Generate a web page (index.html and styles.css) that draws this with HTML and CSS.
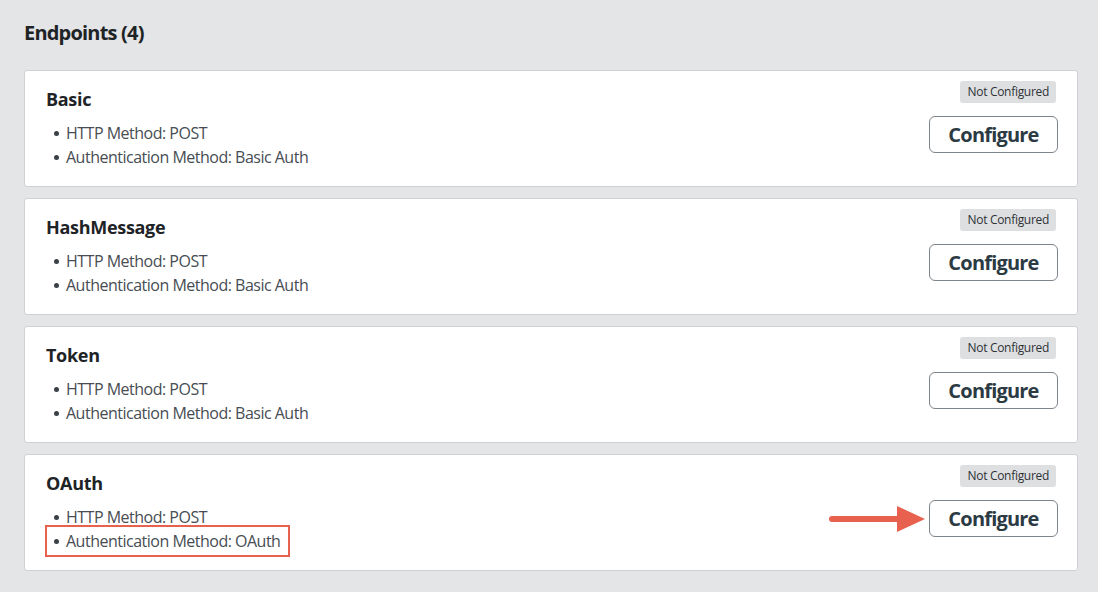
FILE: index.html
```html
<!DOCTYPE html>
<html lang="en">

<head>
    <meta charset="UTF-8">
    <meta name="viewport" content="width=device-width, initial-scale=1.0">
    <title>Endpoints</title>
    <link rel="stylesheet" href="styles.css">
</head>

<body>
    <div class="page">
        <h2 class="page-title">Endpoints (4)</h2>

        <div class="endpoint-list">
            <div class="card">
                <div class="card-info">
                    <h3 class="card-title">Basic</h3>
                    <ul class="props">
                        <li>HTTP Method: POST</li>
                        <li>Authentication Method: Basic Auth</li>
                    </ul>
                </div>
                <div class="card-side">
                    <span class="badge">Not Configured</span>
                    <div class="action-row">
                        <button class="btn">Configure</button>
                    </div>
                </div>
            </div>

            <div class="card">
                <div class="card-info">
                    <h3 class="card-title">HashMessage</h3>
                    <ul class="props">
                        <li>HTTP Method: POST</li>
                        <li>Authentication Method: Basic Auth</li>
                    </ul>
                </div>
                <div class="card-side">
                    <span class="badge">Not Configured</span>
                    <div class="action-row">
                        <button class="btn">Configure</button>
                    </div>
                </div>
            </div>

            <div class="card">
                <div class="card-info">
                    <h3 class="card-title">Token</h3>
                    <ul class="props">
                        <li>HTTP Method: POST</li>
                        <li>Authentication Method: Basic Auth</li>
                    </ul>
                </div>
                <div class="card-side">
                    <span class="badge">Not Configured</span>
                    <div class="action-row">
                        <button class="btn">Configure</button>
                    </div>
                </div>
            </div>

            <div class="card">
                <div class="card-info">
                    <h3 class="card-title">OAuth</h3>
                    <ul class="props">
                        <li>HTTP Method: POST</li>
                        <li class="highlight">Authentication Method: OAuth</li>
                    </ul>
                </div>
                <div class="card-side">
                    <span class="badge">Not Configured</span>
                    <div class="action-row">
                        <!-- annotation arrow -->
                        <svg class="arrow" width="96" height="28" viewBox="0 0 96 28">
                            <line x1="3" y1="14" x2="72" y2="14" stroke="#e8614f" stroke-width="6" stroke-linecap="round" />
                            <polygon points="68,1 96,14 68,27" fill="#e8614f" />
                        </svg>
                        <button class="btn">Configure</button>
                    </div>
                </div>
            </div>
        </div>
    </div>
</body>

</html>
```

FILE: styles.css
```css
body {
    margin: 0;
    font-family: "Open Sans", "Liberation Sans", sans-serif;
    background-color: #e4e5e7;
    color: #1e2326;
}

.page {
    padding: 20px 20px 20px 24px;
}

.page-title {
    margin: 0 0 24px;
    font-size: 20px;
    font-weight: 700;
    letter-spacing: -0.8px;
    line-height: 26px;
}

.endpoint-list {
    display: flex;
    flex-direction: column;
    gap: 11px;
}

.card {
    display: flex;
    justify-content: space-between;
    background: #fff;
    border: 1px solid #cfd1d4;
    border-radius: 3px;
    height: 117px;
    box-sizing: border-box;
    padding: 0 19px 0 21px;
}

.card-title {
    margin: 15px 0 0;
    font-size: 18px;
    font-weight: 700;
    letter-spacing: -0.3px;
    line-height: 26px;
}

.props {
    list-style: none;
    margin: 9px 0 0;
    padding: 0;
}

.props li {
    display: flex;
    align-items: center;
    gap: 7px;
    font-size: 16px;
    letter-spacing: -0.5px;
    line-height: 24px;
    color: #474d53;
    padding-left: 8px;
}

.props li::before {
    content: "";
    width: 5px;
    height: 5px;
    border-radius: 50%;
    background: #3a4046;
}

.props li.highlight {
    width: fit-content;
    outline: 2px solid #e8614f;
    outline-offset: 2px;
    margin-left: 3px;
    padding-left: 5px;
    padding-right: 6px;
}

.card-side {
    display: flex;
    flex-direction: column;
    align-items: flex-end;
    padding-top: 10px;
}

.badge {
    background: #dedfe0;
    color: #2e3338;
    font-size: 12px;
    letter-spacing: -0.3px;
    line-height: 22px;
    padding: 0 7px;
    border-radius: 3px;
    margin-right: 2px;
}

.action-row {
    display: flex;
    align-items: center;
    gap: 4px;
    margin-top: 13px;
}

.btn {
    font-family: "Open Sans", "Liberation Sans", sans-serif;
    font-size: 20px;
    font-weight: 700;
    letter-spacing: -0.8px;
    color: #2c3a43;
    background: #fff;
    border: 1px solid #7d848a;
    border-radius: 6px;
    width: 129px;
    height: 37px;
    padding: 0;
    cursor: pointer;
}
```
